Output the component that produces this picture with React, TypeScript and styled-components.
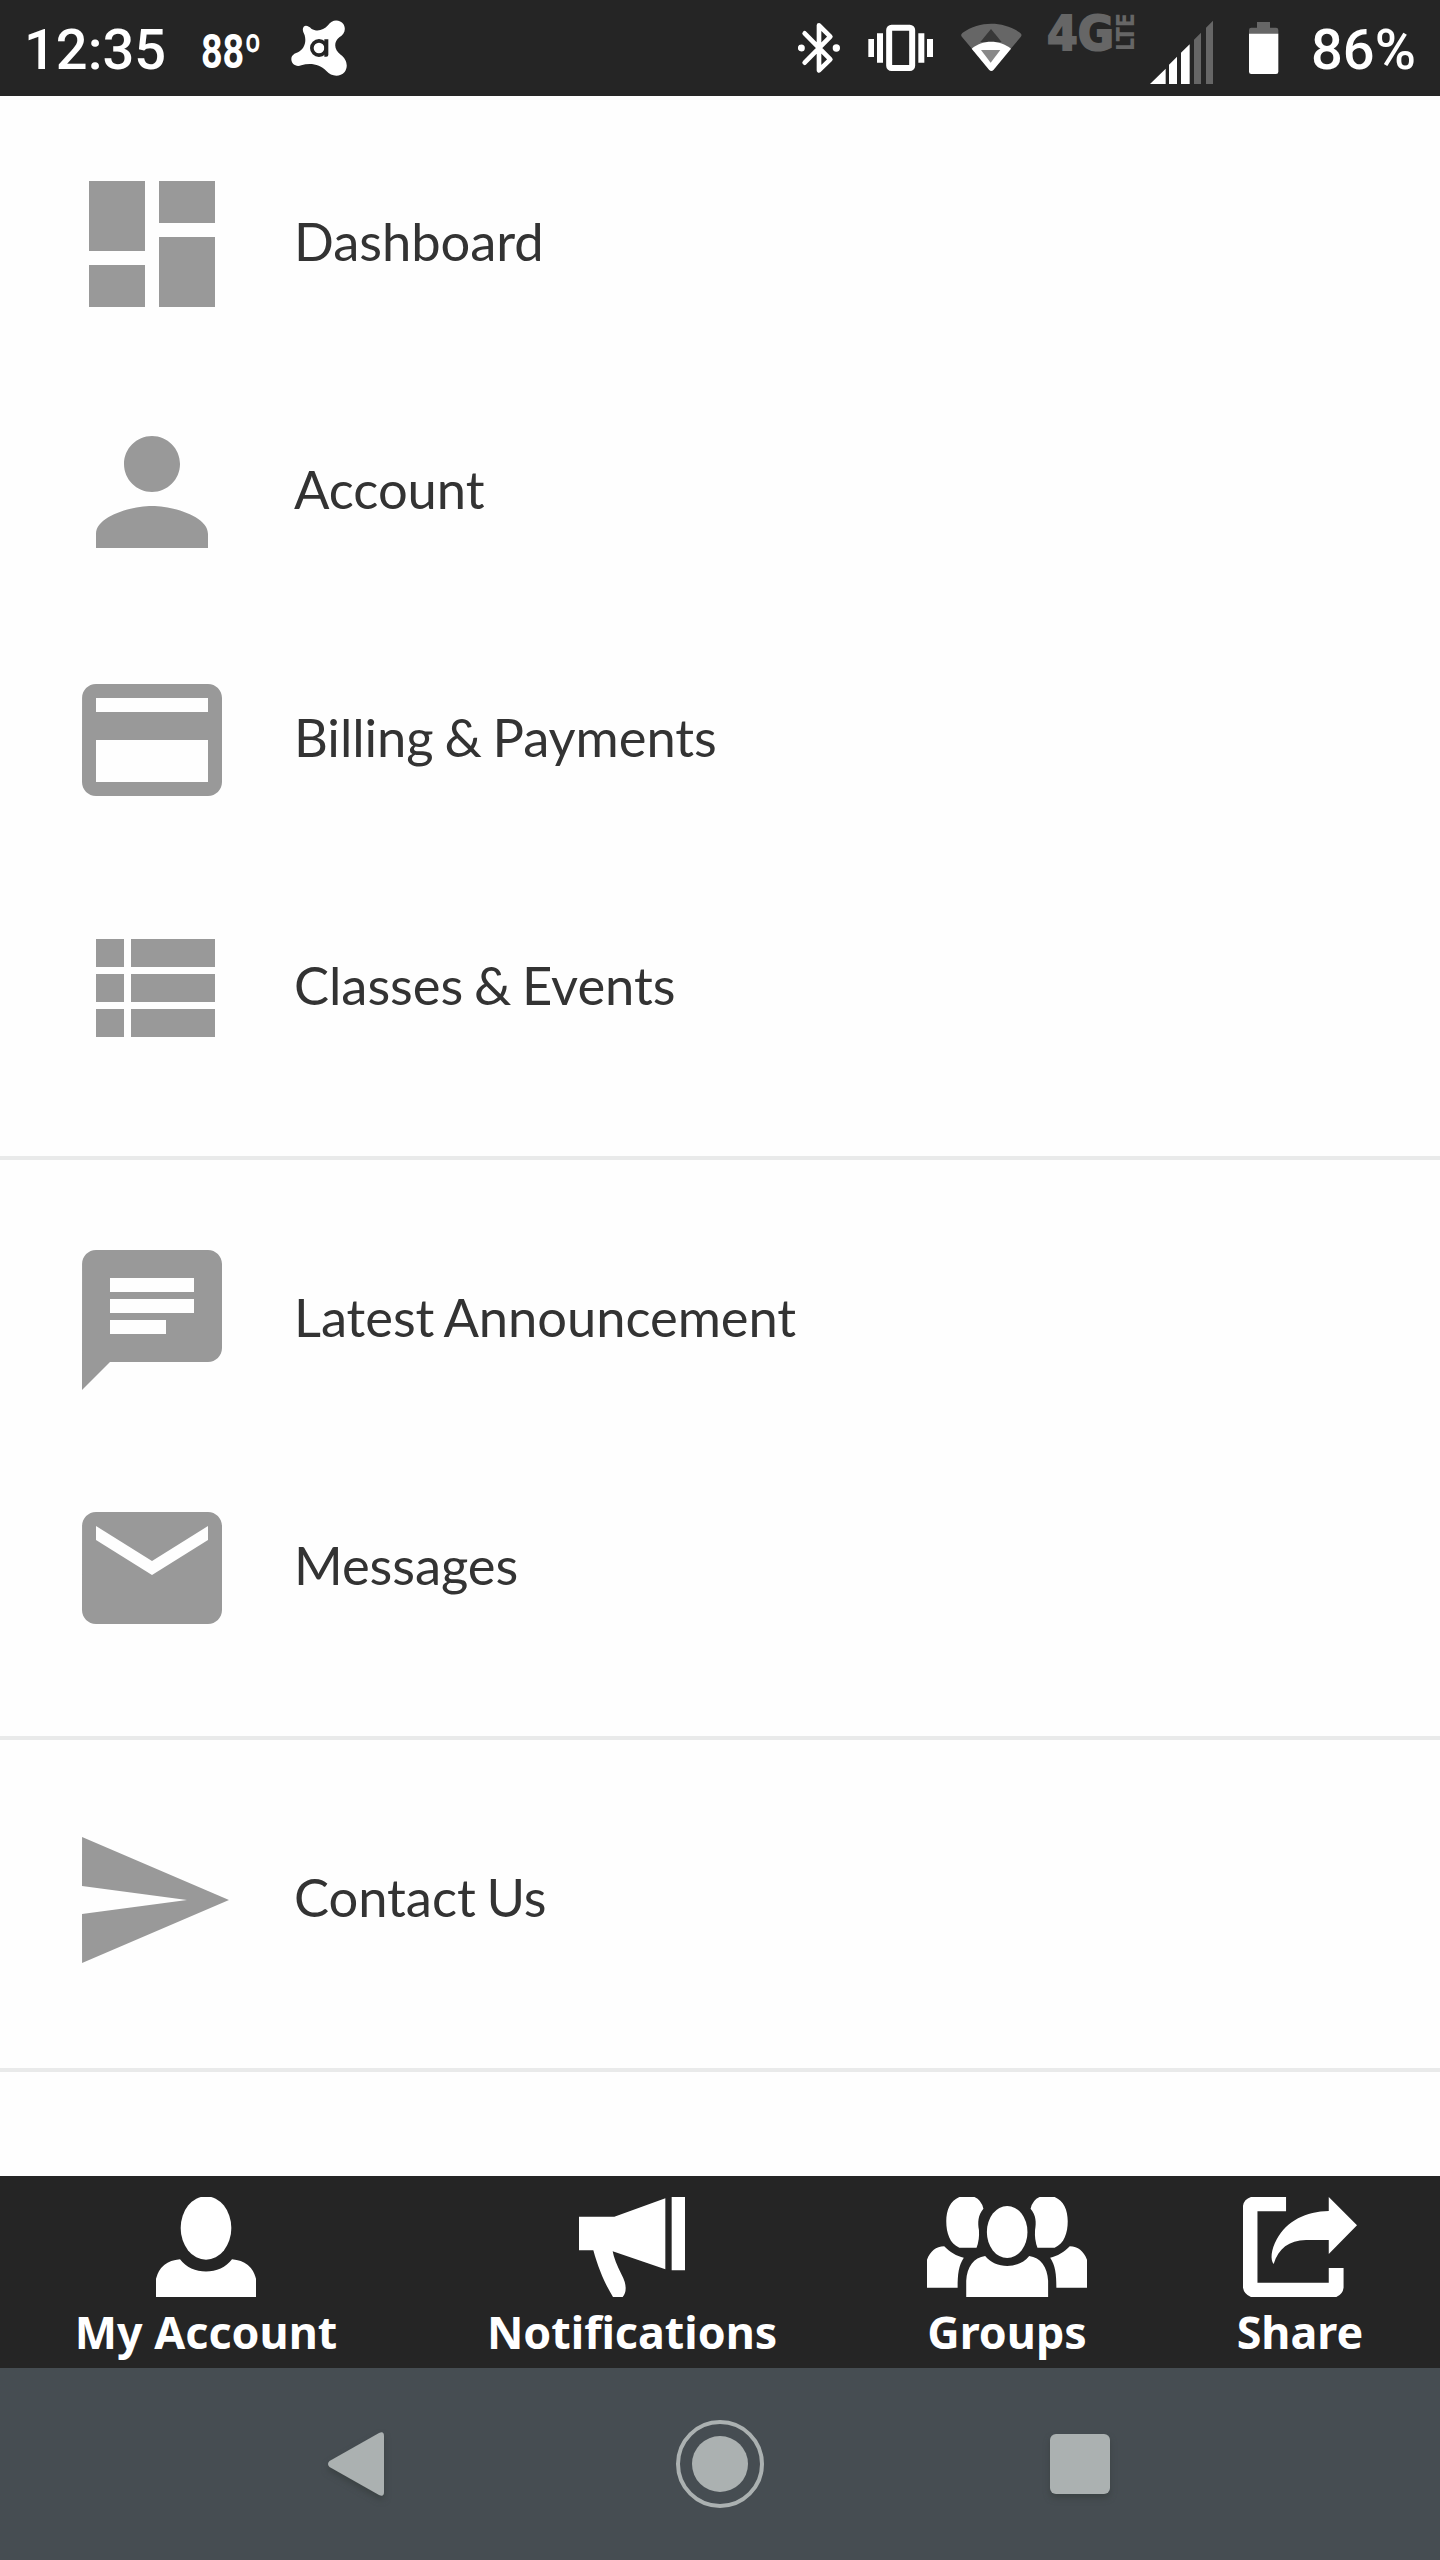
import React from "react";
import styled, { createGlobalStyle } from "styled-components";

const GlobalStyle = createGlobalStyle`
  * { box-sizing: border-box; }
  body { margin: 0; background: #fefefe; }
`;

const Screen = styled.div`
  width: 1440px;
  height: 2560px;
  display: flex;
  flex-direction: column;
  overflow: hidden;
  background: #fefefe;
`;

const StatusBar = styled.header`
  flex: none;
  height: 96px;
  display: flex;
  justify-content: space-between;
  padding: 0 24px;
  background: #252525;
  color: #fff;
`;

const StatusGroup = styled.div`
  display: flex;
  height: 96px;
`;

const StatusText = styled.span<{ $width: number; $gap?: number }>`
  width: ${(p) => p.$width}px;
  margin-left: ${(p) => p.$gap ?? 0}px;
  font: 500 56px/100px Roboto, sans-serif;
  white-space: nowrap;
`;

const Glyph = styled.svg<{ $gap?: number }>`
  display: block;
  flex: none;
  margin-left: ${(p) => p.$gap ?? 0}px;
`;

const Menu = styled.main`
  flex: 1;
  min-height: 0;
  display: flex;
  flex-direction: column;
  overflow: hidden;
`;

const Section = styled.section<{ $first?: boolean }>`
  flex: none;
  padding: ${(p) => (p.$first ? 24 : 36)}px 0 44px;
  border-bottom: 4px solid #e9eaea;
`;

const MenuRow = styled.a`
  display: flex;
  align-items: center;
  height: 248px;
  padding-left: 68px;
  gap: 58px;
  color: #333;
  text-decoration: none;
`;

const MenuIcon = styled.svg`
  display: block;
  flex: none;
  width: 168px;
  height: 168px;
  fill: #999;
`;

const MenuLabel = styled.span`
  font: 400 52.5px/64px Lato, sans-serif;
  letter-spacing: -0.05px;
  word-spacing: -2.6px;
  padding-bottom: 6px;
  white-space: nowrap;
`;

const TabBar = styled.nav`
  flex: none;
  height: 192px;
  display: flex;
  justify-content: space-around;
  padding: 21px 2px 0 0;
  background: #252525;
`;

const Tab = styled.a`
  display: flex;
  flex-direction: column;
  align-items: center;
  color: #fff;
  text-decoration: none;
`;

const TabIcon = styled.svg`
  display: block;
  height: 100px;
  fill: #fff;
`;

const TabLabel = styled.span`
  margin-top: 4px;
  font: 700 44.8px/62px "Noto Sans", "Open Sans", sans-serif;
  white-space: nowrap;
`;

const SystemBar = styled.footer`
  flex: none;
  height: 192px;
  display: flex;
  justify-content: center;
  align-items: center;
  background: #464d52;
`;

const SystemButton = styled.span`
  width: 360px;
  display: flex;
  justify-content: center;
`;

const SystemIcon = styled.svg<{ $shadow?: boolean }>`
  display: block;
  width: 96px;
  height: 96px;
  fill: #abb1b1;
  filter: ${(p) => (p.$shadow ? "drop-shadow(0 4px 3px rgba(50, 56, 54, 0.55))" : "none")};
`;

const icons = {
  dashboard: "M3 13h8V3H3v10zm0 8h8v-6H3v6zm10 0h8V11h-8v10zm0-18v6h8V3h-8z",
  person:
    "M12 12c2.21 0 4-1.79 4-4s-1.79-4-4-4-4 1.79-4 4 1.79 4 4 4zm0 2c-2.67 0-8 1.34-8 4v2h16v-2c0-2.66-5.33-4-8-4z",
  card: "M20 4H4c-1.11 0-1.99.89-1.99 2L2 18c0 1.11.89 2 2 2h16c1.11 0 2-.89 2-2V6c0-1.11-.89-2-2-2zm0 14H4v-6h16v6zm0-10H4V6h16v2z",
  list: "M4 14h4v-4H4v4zm0 5h4v-4H4v4zM4 9h4V5H4v4zm5 5h12v-4H9v4zm0 5h12v-4H9v4zM9 5v4h12V5H9z",
  chat: "M20 2H4c-1.1 0-1.99.9-1.99 2L2 22l4-4h14c1.1 0 2-.9 2-2V4c0-1.1-.9-2-2-2zM6 6v2h12V6zM6 9v2h12V9zM6 12v2h8v-2z",
  mail: "M20 4H4c-1.1 0-1.99.9-1.99 2L2 18c0 1.1.9 2 2 2h16c1.1 0 2-.9 2-2V6c0-1.1-.9-2-2-2zm0 4l-8 5-8-5V6l8 5 8-5v2z",
  send: "M2.01 21L23 12 2.01 3 2 10l15 2-15 2z",
};

type IconName = keyof typeof icons;

const sections: { icon: IconName; label: string }[][] = [
  [
    { icon: "dashboard", label: "Dashboard" },
    { icon: "person", label: "Account" },
    { icon: "card", label: "Billing & Payments" },
    { icon: "list", label: "Classes & Events" },
  ],
  [
    { icon: "chat", label: "Latest Announcement" },
    { icon: "mail", label: "Messages" },
  ],
  [{ icon: "send", label: "Contact Us" }],
];

const groupSide = (
  <>
    <path d="M230 111 H274 Q294 120 300 146 C284 165 283 188 287 210 Q289 240 280 263 H230 C202 252 192 218 192 184 C192 150 204 122 230 111Z" />
    <path d="M136 383 V299 C146 274 162 259 186 259 C202 276 222 289 243 293 C228 316 225 342 225 383Z" />
  </>
);

const tabs = [
  {
    label: "My Account",
    icon: (
      <TabIcon width="100" viewBox="348 111 300 300">
        <ellipse cx="498" cy="204" rx="76" ry="95" />
        <path d="M348 411 V356 Q362 303 420 298 C455 347 541 347 576 298 Q634 303 648 356 V411Z" />
      </TabIcon>
    ),
  },
  {
    label: "Notifications",
    icon: (
      <TabIcon width="106" viewBox="357 111 318 300">
        <path d="M357 170 H463 L616 115 V328 L458 274 Q463 302 485 344 Q497 366 497 385 Q497 401 488 411 H459 C440 380 417 334 400 271 H357Z" />
        <path d="M635 111h40v220h-40z" />
      </TabIcon>
    ),
  },
  {
    label: "Groups",
    icon: (
      <TabIcon width="160" viewBox="136 111 465 300" preserveAspectRatio="none">
        {groupSide}
        <g transform="translate(737 0) scale(-1 1)">{groupSide}</g>
        <ellipse cx="369" cy="216" rx="59" ry="78" />
        <path d="M250 411 V362 C252 322 272 292 305 288 C335 328 403 328 433 288 C466 292 486 322 488 362 V411Z" />
      </TabIcon>
    ),
  },
  {
    label: "Share",
    icon: (
      <TabIcon width="114" viewBox="1057 111 331 300" preserveAspectRatio="none">
        <path d="M1182 111 V154 H1099 V368 H1306 V324 H1349 V383 Q1347 402 1328 411 H1080 Q1060 402 1057 383 V137 Q1060 118 1080 111Z" />
        <path d="M1306 111 L1388 196 L1306 282 V240 H1240 C1190 242 1160 265 1146 312 C1136 300 1138 270 1155 238 C1185 182 1240 154 1306 153Z" />
      </TabIcon>
    ),
  },
];

function StatusIcons() {
  return (
    <>
      <Glyph width="42" height="96" viewBox="114 0 126 288">
        <path
          d="M134 100 L211 178 L177 211 V76 L211 110 L134 188"
          fill="none"
          stroke="#fff"
          strokeWidth="14"
          strokeLinecap="round"
          strokeLinejoin="round"
        />
        <circle cx="124" cy="144" r="10.5" fill="#fff" />
        <circle cx="229" cy="144" r="11" fill="#fff" />
      </Glyph>
      <Glyph $gap={28} width="66" height="96" viewBox="325 0 198 288" fill="#fff">
        <rect x="388.500" y="83" width="69" height="121" rx="7" fill="none" stroke="#fff" strokeWidth="18" />
        <path d="M352 100h18v88h-18zM326 117h17v54h-17zM476 100h18v88h-18zM502 117h18v54h-18z" />
      </Glyph>
      <Glyph $gap={27} width="61" height="96" viewBox="604 0 183 288">
        <path d="M609 98 C660 62 730 62 781 98 Q789 104 783 111 L700 209 H690 L607 111 Q601 104 609 98Z" fill="#666" />
        <path d="M694 87 L726 126 H662Z" fill="#383838" />
        <path d="M636 146 C668 118 720 118 754 146 L702 209 Q695 217 688 209Z" fill="#fff" />
        <path d="M664 150 H722 L693 188Z" fill="#888" />
      </Glyph>
      <Glyph $gap={18} width="104" height="96" viewBox="1040 0 104 96" fill="#666" stroke="#666">
        <text
          x="1047"
          y="49.500"
          fontFamily="DejaVu Sans"
          fontWeight="700"
          fontSize="48"
          strokeWidth="2"
          textLength="67"
          lengthAdjust="spacingAndGlyphs"
        >
          4G
        </text>
        <text
          transform="translate(1134 51) rotate(-90)"
          fontFamily="DejaVu Sans"
          fontWeight="700"
          fontSize="24"
          strokeWidth="0"
          textLength="38"
          lengthAdjust="spacingAndGlyphs"
        >
          LTE
        </text>
      </Glyph>
      <Glyph $gap={6} width="63" height="96" viewBox="390 0 189 288" fill="#fff">
        <path d="M390 252L437 206V252zM447 252V194L471 170V252zM483 252V158L509 133V252z" />
        <path d="M522 252V119L543 98V252zM558 252V83L579 62V252z" fill="#666" />
      </Glyph>
      <Glyph $gap={36} width="30" height="96" viewBox="687 0 90 288">
        <path d="M687 102V90Q687 83 694 83H711V66H750V83H768Q775 83 775 90V102z" fill="#666" />
        <path d="M687 101H775V215Q775 222 768 222H694Q687 222 687 215z" fill="#fff" />
      </Glyph>
    </>
  );
}

export default function App() {
  return (
    <Screen>
      <GlobalStyle />
      <StatusBar>
        <StatusGroup>
          <StatusText $width={172}>12:35</StatusText>
          <Glyph width="76" height="96" viewBox="196 0 76 96" fill="#fff">
            <text x="201" y="67.500" fontFamily="Roboto" fontWeight="700" fontSize="48" textLength="60.5" lengthAdjust="spacingAndGlyphs">
              88º
            </text>
          </Glyph>
          <Glyph $gap={19} width="56" height="96" viewBox="873 0 168 288">
            <path
              fill="#fff"
              d="M911 80C918 74 928 80 934 86C950 96 970 92 984 76C996 56 1020 58 1030 72C1040 88 1032 104 1018 112C1000 126 1002 150 1022 164C1040 176 1046 200 1034 216C1018 234 992 228 980 214C960 192 930 188 904 196C888 202 874 192 874 178C874 166 884 160 894 157C912 148 920 128 914 106C911 98 905 90 911 80Z"
            />
            <circle cx="957" cy="144" r="21.500" fill="none" stroke="#252525" strokeWidth="11" />
            <path d="M973 118h12v46q0 6 -6 6h-6z" fill="#252525" />
          </Glyph>
        </StatusGroup>
        <StatusGroup>
          <StatusIcons />
          <StatusText $gap={32} $width={105}>
            86%
          </StatusText>
        </StatusGroup>
      </StatusBar>

      <Menu>
        {sections.map((rows, i) => (
          <Section key={i} $first={i === 0}>
            {rows.map((row) => (
              <MenuRow key={row.label}>
                <MenuIcon viewBox="0 0 24 24">
                  <path fillRule="evenodd" d={icons[row.icon]} />
                </MenuIcon>
                <MenuLabel>{row.label}</MenuLabel>
              </MenuRow>
            ))}
          </Section>
        ))}
      </Menu>

      <TabBar>
        {tabs.map((tab) => (
          <Tab key={tab.label}>
            {tab.icon}
            <TabLabel>{tab.label}</TabLabel>
          </Tab>
        ))}
      </TabBar>

      <SystemBar>
        <SystemButton>
          <SystemIcon $shadow viewBox="312 2416 96 96">
            <path d="M329.500 2461 L379 2433 Q384 2430.500 384 2436 V2492 Q384 2497.500 379 2495 L329.500 2467 Q326.500 2464 329.500 2461Z" />
          </SystemIcon>
        </SystemButton>
        <SystemButton>
          <SystemIcon viewBox="0 0 96 96">
            <circle cx="48" cy="48" r="42" fill="none" stroke="#abb1b1" strokeWidth="4" />
            <circle cx="48" cy="48" r="28" />
          </SystemIcon>
        </SystemButton>
        <SystemButton>
          <SystemIcon $shadow viewBox="0 0 96 96">
            <rect x="18" y="18" width="60" height="60" rx="6" />
          </SystemIcon>
        </SystemButton>
      </SystemBar>
    </Screen>
  );
}
